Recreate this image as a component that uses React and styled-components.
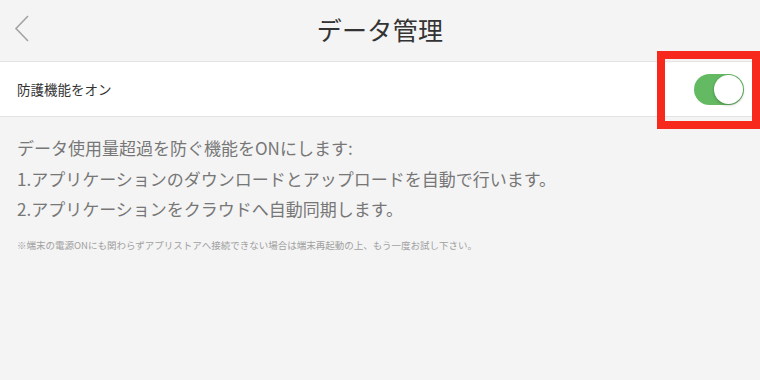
import React, { useState } from 'react'
import styled, { createGlobalStyle } from 'styled-components'

const GlobalStyle = createGlobalStyle`
  html, body {
    margin: 0;
    padding: 0;
    background: #f4f4f4;
    font-family: "Noto Sans CJK JP", "Noto Sans", sans-serif;
  }
`;

const Page = styled.div`
  width: 760px;
  height: 380px;
  background: #f4f4f4;
  overflow: hidden;
`;

const Header = styled.header`
  height: 62px;
  display: flex;
  align-items: center;
  justify-content: center;
  position: relative;
  padding-bottom: 4px;
  border-bottom: 1px solid #e4e4e4;
  box-sizing: border-box;
`;

const BackButton = styled.button`
  position: absolute;
  left: 12px;
  top: 13px;
  width: 22px;
  height: 32px;
  padding: 0;
  border: none;
  background: none;
  cursor: pointer;
`;

const Title = styled.h1`
  margin: 0;
  font-size: 25px;
  font-weight: 400;
  color: #333;
  letter-spacing: 0.3px;
`;

const Row = styled.div`
  height: 55px;
  background: #fff;
  display: flex;
  align-items: center;
  justify-content: space-between;
  padding: 0 16px 0 17px;
  border-bottom: 1px solid #e4e4e4;
  box-sizing: border-box;
`;

const Label = styled.span`
  font-size: 13.5px;
  color: #333;
`;

const ToggleWrap = styled.div`
  position: relative;
  display: flex;
`;

const Toggle = styled.button`
  width: 50px;
  height: 31px;
  border-radius: 16px;
  border: none;
  padding: 0;
  background: ${p => (p.$on ? '#63ba63' : '#ddd')};
  position: relative;
  cursor: pointer;
`;

const Knob = styled.span`
  position: absolute;
  top: 1px;
  left: ${p => (p.$on ? '20px' : '1px')};
  width: 29px;
  height: 29px;
  border-radius: 50%;
  background: #fff;
  box-shadow: 0 1px 3px rgba(0, 0, 0, 0.3);
`;

// red annotation box drawn over the switch
const Highlight = styled.div`
  position: absolute;
  left: -37px;
  top: -23px;
  width: 103px;
  height: 78px;
  border: 8px solid #f7281c;
  box-sizing: border-box;
  pointer-events: none;
`;

const Description = styled.div`
  padding: 16px 17px 0;
`;

const Line = styled.p`
  margin: 0;
  font-size: 17px;
  line-height: 30.5px;
  color: #777;
`;

const Note = styled.p`
  margin: 13px 0 0;
  font-size: 9.5px;
  line-height: 14px;
  color: #a0a0a0;
`;

const Chevron = () => (
  <svg width="22" height="32" viewBox="0 0 22 32">
    <path d="M16 3 L4 15.5 L16 28" fill="none" stroke="#a3a3a3" strokeWidth="1.6" />
  </svg>
);

export default function App() {
  const [on, setOn] = useState(true);
  return (
    <Page>
      <GlobalStyle />
      <Header>
        <BackButton aria-label="戻る"><Chevron /></BackButton>
        <Title>データ管理</Title>
      </Header>
      <Row>
        <Label>防護機能をオン</Label>
        <ToggleWrap>
          <Toggle $on={on} onClick={() => setOn(!on)}>
            <Knob $on={on} />
          </Toggle>
          <Highlight />
        </ToggleWrap>
      </Row>
      <Description>
        <Line>データ使用量超過を防ぐ機能をONにします:</Line>
        <Line>1.アプリケーションのダウンロードとアップロードを自動で行います。</Line>
        <Line>2.アプリケーションをクラウドへ自動同期します。</Line>
        <Note>※端末の電源ONにも関わらずアプリストアへ接続できない場合は端末再起動の上、もう一度お試し下さい。</Note>
      </Description>
    </Page>
  );
}
